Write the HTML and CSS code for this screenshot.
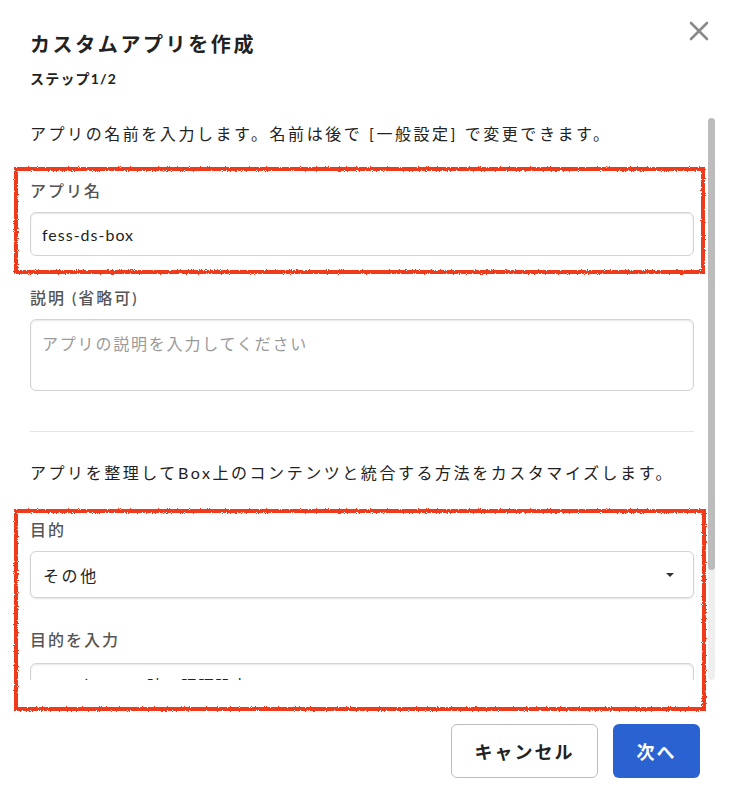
FILE: index.html
```html
<!DOCTYPE HTML>
<html>
<head>
<meta charset="utf-8">
<link rel="stylesheet" href="styles.css">
</head>
<body>
<svg class="defs" width="0" height="0">
  <filter id="rough">
    <feTurbulence type="fractalNoise" baseFrequency="0.9" numOctaves="2" seed="3" result="noise"/>
    <feDisplacementMap in="SourceGraphic" in2="noise" scale="3"/>
  </filter>
</svg>
<div class="dialog">
  <div class="head">
    <h1 class="title">カスタムアプリを作成</h1>
    <p class="step">ステップ1/2</p>
    <button class="close" aria-label="閉じる">
      <svg width="20" height="20" viewBox="0 0 20 20"><path d="M2 2 L18 18 M18 2 L2 18" stroke="#8a8a8a" stroke-width="2.6" stroke-linecap="round"/></svg>
    </button>
  </div>

  <div class="scroller">
    <div class="body">
      <p class="intro">アプリの名前を入力します。名前は後で [一般設定] で変更できます。</p>

      <div class="field">
        <label class="label">アプリ名</label>
        <div class="input"><span class="val">fess-ds-box</span></div>
      </div>

      <div class="field">
        <label class="label">説明 (省略可)</label>
        <div class="input area"><span class="ph">アプリの説明を入力してください</span></div>
      </div>

      <hr class="divider">

      <p class="intro">アプリを整理してBox上のコンテンツと統合する方法をカスタマイズします。</p>

      <div class="field">
        <label class="label">目的</label>
        <div class="input select"><span class="val">その他</span><span class="caret"></span></div>
      </div>

      <div class="field last">
        <label class="label">目的を入力</label>
        <div class="input"><span class="val">fess クロール時の認証設定</span></div>
      </div>
    </div>
    <div class="track"><div class="thumb"></div></div>
  </div>

  <div class="foot">
    <button class="btn cancel">キャンセル</button>
    <button class="btn next">次へ</button>
  </div>

  <div class="mark mark-name"></div>
  <div class="mark mark-purpose"></div>
</div>
</body>
</html>
```

FILE: styles.css
```css
body {
  margin: 0;
  background: #fff;
  font-family: Lato, "Noto Sans CJK JP", sans-serif;
  color: #222;
}
.defs {
  position: absolute;
}
.dialog {
  position: relative;
  width: 729px;
  height: 809px;
  background: #fff;
  overflow: hidden;
}
.head {
  position: relative;
  padding: 30px 30px 0 30px;
  height: 72px;
}
.title {
  margin: 0;
  font-size: 20px;
  line-height: 28px;
  letter-spacing: 2.6px;
  font-weight: bold;
  color: #222;
}
.step {
  margin: 11px 0 0 0;
  font-size: 14px;
  line-height: 20px;
  letter-spacing: 1.2px;
  font-weight: bold;
}
.close {
  position: absolute;
  top: 21px;
  left: 689px;
  border: none;
  background: none;
  padding: 0;
  width: 20px;
  height: 20px;
}
.scroller {
  display: flex;
  height: 578px;
  width: 716px;
}
.body {
  width: 664px;
  padding: 20px 14px 0 30px;
  overflow: hidden;
}
.track {
  width: 7px;
  margin: 16px 0 0 0;
  background: #efefef;
  border-radius: 4px;
}
.thumb {
  height: 452px;
  background: #bcbcbc;
  border-radius: 4px;
}
.intro {
  margin: 0;
  font-size: 16px;
  line-height: 24px;
  letter-spacing: 2.55px;
  white-space: nowrap;
}
.field {
  margin-top: 33px;
}
.field + .field {
  margin-top: 30px;
}
.label {
  display: block;
  font-size: 16px;
  line-height: 24px;
  letter-spacing: 2px;
  font-weight: 500;
  color: #555;
  margin-bottom: 9px;
}
.input {
  display: flex;
  align-items: center;
  box-sizing: border-box;
  height: 44px;
  padding: 0 11px;
  border: 1px solid #d3d3d3;
  border-radius: 6px;
  box-shadow: inset 0 1px 2px rgba(0, 0, 0, 0.1);
  font-size: 16px;
  letter-spacing: 1px;
}
.input .val {
  color: #222;
}
.area {
  height: 72px;
  align-items: flex-start;
  padding-top: 12px;
}
.ph {
  color: #9a9a9a;
  letter-spacing: 1.8px;
  line-height: 24px;
}
.select {
  height: 47px;
  justify-content: space-between;
  box-shadow: 0 1px 2px rgba(0, 0, 0, 0.12);
  padding: 0 19px 0 12px;
}
.select .val {
  letter-spacing: 2.6px;
}
.caret {
  width: 0;
  height: 0;
  border-left: 4px solid transparent;
  border-right: 4px solid transparent;
  border-top: 4px solid #333;
}
.last .label {
  margin-bottom: 11px;
}
.divider {
  border: none;
  border-top: 1px solid #e6e6e6;
  margin: 40px 0 29px 0;
}
.foot {
  display: flex;
  justify-content: flex-end;
  gap: 15px;
  padding: 44px 29px 0 0;
}
.btn {
  height: 54px;
  border-radius: 6px;
  font-family: Lato, "Noto Sans CJK JP", sans-serif;
  font-size: 18px;
  font-weight: bold;
  letter-spacing: 2px;
}
.cancel {
  width: 147px;
  background: #fff;
  border: 1px solid #bdbdbd;
  color: #222;
}
.next {
  width: 87px;
  background: #2a62d1;
  border: none;
  color: #fff;
}
.mark {
  position: absolute;
  border: 4px solid #ef3b1c;
  filter: url(#rough);
}
.mark-name {
  left: 14px;
  top: 167px;
  width: 683px;
  height: 99px;
}
.mark-purpose {
  left: 14px;
  top: 509px;
  width: 684px;
  height: 194px;
}
```
